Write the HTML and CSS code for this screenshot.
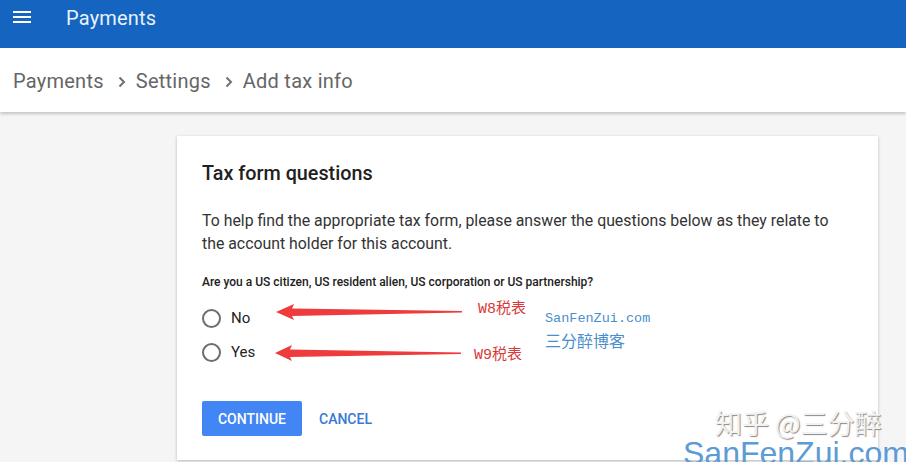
FILE: index.html
```html
<!DOCTYPE html>
<html>
<head>
<meta charset="utf-8">
<link rel="stylesheet" href="styles.css">
</head>
<body>
<header class="appbar">
  <svg class="menu" width="18" height="12" viewBox="0 0 18 12"><rect x="0" y="0" width="18" height="2" fill="#fff"/><rect x="0" y="5" width="18" height="2" fill="#fff"/><rect x="0" y="10" width="18" height="2" fill="#fff"/></svg>
  <span class="apptitle">Payments</span>
</header>
<nav class="crumbs">
  <span>Payments</span>
  <svg class="chev" width="8" height="12" viewBox="0 0 8 12"><polyline points="1.5,1.5 6,6 1.5,10.5" fill="none" stroke="#707070" stroke-width="2"/></svg>
  <span>Settings</span>
  <svg class="chev" width="8" height="12" viewBox="0 0 8 12"><polyline points="1.5,1.5 6,6 1.5,10.5" fill="none" stroke="#707070" stroke-width="2"/></svg>
  <span>Add tax info</span>
</nav>
<main class="main">
  <section class="card">
    <h2 class="title">Tax form questions</h2>
    <p class="intro">To help find the appropriate tax form, please answer the questions below as they relate to the account holder for this account.</p>
    <p class="question">Are you a US citizen, US resident alien, US corporation or US partnership?</p>
    <div class="options">
      <label class="option"><span class="radio"></span><span>No</span></label>
      <label class="option"><span class="radio"></span><span>Yes</span></label>
    </div>
    <div class="actions">
      <button class="btn primary">CONTINUE</button>
      <button class="btn flat">CANCEL</button>
    </div>
    <svg class="arrow a1" width="190" height="20" viewBox="0 0 190 20"><polygon points="0,8 18,0 16,4.5 186,7 186,8.5 16,12 18,16" fill="#ee3b3b"/></svg>
    <svg class="arrow a2" width="190" height="20" viewBox="0 0 190 20"><polygon points="0,8 17,0 15,4.5 186,7.5 186,9 15,12 17,16" fill="#ee3b3b"/></svg>
    <span class="note n1">W8税表</span>
    <span class="note n2">W9税表</span>
    <span class="site">SanFenZui.com</span>
    <span class="blog">三分醉博客</span>
  </section>
</main>
<div class="wm-zh">知乎 @三分醉</div>
<div class="wm-en">SanFenZui.com</div>
</body>
</html>
```

FILE: styles.css
```css
html, body {
  margin: 0;
  padding: 0;
}
body {
  width: 906px;
  height: 462px;
  overflow: hidden;
  background: #f5f5f5;
  font-family: Roboto, "Noto Sans", sans-serif;
  position: relative;
}
.appbar {
  height: 48px;
  background: #1565c0;
  display: flex;
  align-items: center;
  padding-left: 13px;
  box-sizing: border-box;
}
.menu {
  display: block;
  margin-top: -15px;
}
.apptitle {
  color: #e8f1fc;
  font-size: 20px;
  margin-left: 35px;
  margin-top: -12px;
  letter-spacing: 0.2px;
}
.crumbs {
  height: 64px;
  background: #fff;
  display: flex;
  align-items: center;
  gap: 12px;
  padding-left: 13px;
  box-sizing: border-box;
  color: #666;
  font-size: 20px;
  letter-spacing: 0.25px;
  box-shadow: 0 2px 3px rgba(0,0,0,0.2);
  position: relative;
}
.crumbs span {
  margin-top: 2px;
}
.chev {
  display: block;
  margin: 3px -2px 0 2px;
}
.main {
  padding: 24px 0 0 177px;
}
.card {
  position: relative;
  width: 701px;
  height: 324px;
  box-sizing: border-box;
  background: #fff;
  box-shadow: 0 1px 3px rgba(0,0,0,0.25);
  padding: 24px 24px 0 25px;
}
.title {
  margin: 0;
  font-size: 19.8px;
  line-height: 28px;
  font-weight: 500;
  color: #212121;
}
.intro {
  margin: 21px 0 0;
  font-size: 15.85px;
  line-height: 23px;
  color: #333;
  width: 640px;
}
.question {
  margin: 19px 0 0;
  font-size: 12px;
  line-height: 16px;
  font-weight: 500;
  color: #212121;
}
.options {
  margin-top: 11px;
  display: flex;
  flex-direction: column;
}
.option {
  height: 34px;
  display: flex;
  align-items: center;
  gap: 10px;
  font-size: 15px;
  color: #222;
}
.radio {
  width: 19px;
  height: 19px;
  box-sizing: border-box;
  border: 2px solid #6e6e6e;
  border-radius: 50%;
}
.actions {
  margin-top: 32px;
  display: flex;
  align-items: center;
  gap: 17px;
}
.btn {
  font-family: Roboto, sans-serif;
  font-size: 14px;
  font-weight: 500;
  border: none;
  height: 35px;
  padding: 0;
  background: none;
}
.primary {
  width: 100px;
  background: #4285f4;
  color: #fff;
  border-radius: 2px;
}
.flat {
  color: #3a78d4;
}
.arrow {
  position: absolute;
  display: block;
}
.a1 {
  left: 99px;
  top: 168px;
}
.a2 {
  left: 98px;
  top: 209px;
}
.note {
  position: absolute;
  font-size: 15px;
  color: #d93a3a;
  line-height: 18px;
  font-family: "Liberation Mono", "Noto Sans CJK SC", monospace;
}
.n1 {
  left: 301px;
  top: 165px;
}
.n2 {
  left: 297px;
  top: 211px;
}
.site {
  position: absolute;
  left: 368px;
  top: 174px;
  font-family: "Liberation Mono", monospace;
  font-size: 13.5px;
  line-height: 18px;
  color: #4a8fcc;
}
.blog {
  position: absolute;
  left: 368px;
  top: 194px;
  font-family: "Noto Sans CJK SC", sans-serif;
  font-size: 16px;
  line-height: 20px;
  color: #4a8fcc;
}
.wm-zh {
  position: absolute;
  left: 715px;
  top: 407px;
  font-family: "Noto Sans CJK SC", sans-serif;
  font-size: 27px;
  line-height: 32px;
  color: #f2f2f2;
  text-shadow: 1px 1px 1px #8a8a8a;
}
.wm-en {
  position: absolute;
  left: 683px;
  top: 437px;
  font-family: "Liberation Sans", Arial, sans-serif;
  font-size: 32px;
  line-height: 32px;
  color: #5d9bd6;
}
```
